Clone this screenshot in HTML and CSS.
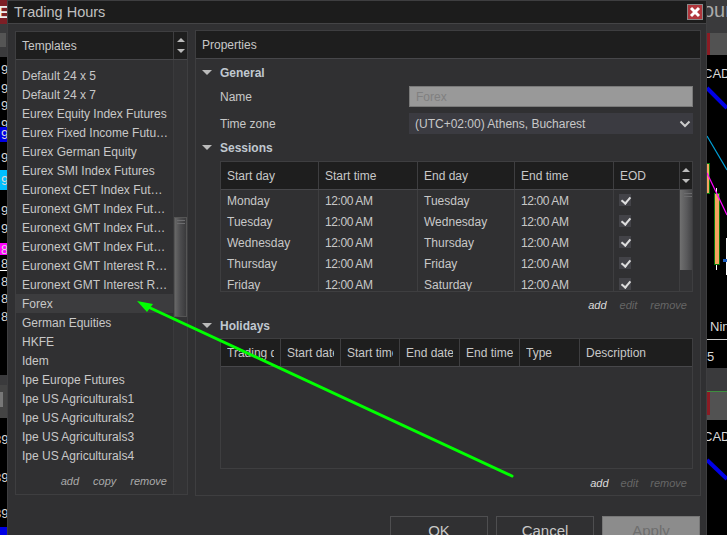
FILE: index.html
```html
<!DOCTYPE html>
<html>
	<head>
		<meta charset="UTF-8">
		<title>Trading Hours</title>
		<link rel="stylesheet" href="styles.css">
	</head>
	<body>
		<div class="desktop">
			<!-- charts behind the dialog -->
			<svg class="backdrop" width="727" height="535" viewBox="0 0 727 535">
				<rect x="0" y="0" width="7" height="24" fill="#7d1f26"/>
				<rect x="0" y="24" width="7" height="33" fill="#3a3a3c"/>
				<rect x="0" y="33" width="6" height="14" fill="#555"/>
				<rect x="0" y="270" width="7" height="1" fill="#fff"/>
				<rect x="0" y="375" width="7" height="10" fill="#3a3a3c"/>
				<rect x="0" y="385" width="7" height="33" fill="#444"/>
				<rect x="0" y="392" width="3" height="15" fill="#777"/>
				<rect x="0" y="527" width="7" height="8" fill="#0000e6"/>
				<g class="bg-num">
					<text class="bg-e" x="-2" y="18">E</text>
					<text x="1" y="74">9</text>
					<text x="1" y="93">9</text>
					<text x="1" y="110">9</text>
					<text x="1" y="129">9</text>
				</g>
				<rect x="0" y="127" width="7" height="15" fill="#0000e6"/>
				<rect x="0" y="170" width="7" height="20" fill="#00bfff"/>
				<rect x="0" y="243" width="7" height="12" fill="#ff00ff"/>
				<g class="bg-num">
					<text x="1" y="139">9</text>
					<text x="1" y="162">9</text>
					<text x="1" y="185">9</text>
					<text x="1" y="215">9</text>
					<text x="1" y="233">9</text>
					<text x="1" y="254">8</text>
					<text x="1" y="268">8</text>
					<text x="1" y="286">8</text>
					<text x="1" y="303">8</text>
					<text x="1" y="321">8</text>
					<text x="-6" y="444">89</text>
					<text x="-6" y="482">89</text>
					<text x="-6" y="518">89</text>
				</g>

				<rect x="707" y="0" width="20" height="33" fill="#3a3a3c"/>
				<rect x="707" y="33" width="20" height="22" fill="#525252"/>
				<rect x="707" y="33" width="3" height="22" fill="#8a1c24"/>
				<rect x="707" y="368" width="20" height="23" fill="#3a3a3c"/>
				<rect x="707" y="391" width="20" height="1" fill="#3e8e3e"/>
				<rect x="707" y="392" width="20" height="28" fill="#525252"/>
				<rect x="707" y="392" width="3" height="23" fill="#8a1c24"/>
				<line x1="707" y1="88" x2="727" y2="108" stroke="#0000e6" stroke-width="4"/>
				<line x1="707" y1="136" x2="727" y2="170" stroke="#00a0d8" stroke-width="1.2"/>
				<line x1="707" y1="460" x2="727" y2="479" stroke="#0000e6" stroke-width="4"/>
				<line x1="716.5" y1="188" x2="716.5" y2="270" stroke="#fff"/>
				<rect x="706.5" y="163.5" width="3" height="30" fill="#f4a460" stroke="#0a7a0a"/>
				<rect x="714.5" y="193.5" width="5" height="71" fill="#f4a460" stroke="#0a7a0a"/>
				<line x1="707" y1="173" x2="727" y2="215" stroke="#ff00ff" stroke-width="1.2"/>
				<rect x="726" y="238" width="1" height="37" fill="#fff"/>
				<rect x="723" y="259" width="4" height="3" fill="#2060c0"/>
				<rect x="707" y="339" width="20" height="1" fill="#ccc"/>
				<g class="bg-label">
					<text class="bg-big" x="703" y="17">ount</text>
					<text x="703" y="78">CAD</text>
					<text x="710" y="331">Ninj</text>
					<text x="707" y="361">5</text>
					<text x="703" y="441">CAD</text>
				</g>
			</svg>

			<div class="dialog">
				<div class="titlebar">
					<span class="title">Trading Hours</span>
					<button class="close">
						<svg width="12" height="12" viewBox="0 0 12 12"><path d="M2 2l8 8M10 2l-8 8" stroke="#fff" stroke-width="3"/></svg>
					</button>
				</div>
				<div class="content">
					<div class="panel templates">
						<div class="panel-head">
							<span class="panel-title">Templates</span>
							<div class="spin">
								<i class="up"></i>
								<i class="down"></i>
							</div>
						</div>
						<div class="tpl-body">
							<div class="tpl-main">
								<ul class="tpl-list">
									<li>Default 24 x 5</li>
									<li>Default 24 x 7</li>
									<li>Eurex Equity Index Futures</li>
									<li>Eurex Fixed Income Futures</li>
									<li>Eurex German Equity</li>
									<li>Eurex SMI Index Futures</li>
									<li>Euronext CET Index Futures</li>
									<li>Euronext GMT Index Futures</li>
									<li>Euronext GMT Index Futures</li>
									<li>Euronext GMT Index Futures</li>
									<li>Euronext GMT Interest Rate Futures</li>
									<li>Euronext GMT Interest Rate Futures</li>
									<li class="selected">Forex</li>
									<li>German Equities</li>
									<li>HKFE</li>
									<li>Idem</li>
									<li>Ipe Europe Futures</li>
									<li>Ipe US Agriculturals1</li>
									<li>Ipe US Agriculturals2</li>
									<li>Ipe US Agriculturals3</li>
									<li>Ipe US Agriculturals4</li>
								</ul>
								<div class="links tpl-links">
									<a>add</a>
									<a>copy</a>
									<a>remove</a>
								</div>
							</div>
							<div class="track tpl-track">
								<div class="thumb tpl-thumb"><b></b><b></b></div>
							</div>
						</div>
					</div>

					<div class="panel props">
						<div class="panel-head">
							<span class="panel-title">Properties</span>
						</div>
						<div class="props-body">
							<div class="section">General</div>
							<div class="field first">
								<label>Name</label>
								<div class="input">Forex</div>
							</div>
							<div class="field">
								<label>Time zone</label>
								<div class="select">
									<span>(UTC+02:00) Athens, Bucharest</span>
									<svg width="12" height="8" viewBox="0 0 12 8"><path d="M1.5 1.5l4.5 4.5 4.5-4.5" fill="none" stroke="#ccc" stroke-width="2"/></svg>
								</div>
							</div>

							<div class="section sessions-head">Sessions</div>
							<div class="grid sessions">
								<div class="grid-head">
									<div class="cell">Start day</div>
									<div class="cell">Start time</div>
									<div class="cell">End day</div>
									<div class="cell">End time</div>
									<div class="cell">EOD</div>
									<div class="spin"><i class="up"></i><i class="down"></i></div>
								</div>
								<div class="sess-body">
									<div class="sess-rows">
										<div class="row"><div class="cell">Monday</div><div class="cell time">12:00 AM</div><div class="cell">Tuesday</div><div class="cell time">12:00 AM</div><div class="cell"><span class="check"></span></div></div>
										<div class="row"><div class="cell">Tuesday</div><div class="cell time">12:00 AM</div><div class="cell">Wednesday</div><div class="cell time">12:00 AM</div><div class="cell"><span class="check"></span></div></div>
										<div class="row"><div class="cell">Wednesday</div><div class="cell time">12:00 AM</div><div class="cell">Thursday</div><div class="cell time">12:00 AM</div><div class="cell"><span class="check"></span></div></div>
										<div class="row"><div class="cell">Thursday</div><div class="cell time">12:00 AM</div><div class="cell">Friday</div><div class="cell time">12:00 AM</div><div class="cell"><span class="check"></span></div></div>
										<div class="row"><div class="cell">Friday</div><div class="cell time">12:00 AM</div><div class="cell">Saturday</div><div class="cell time">12:00 AM</div><div class="cell"><span class="check"></span></div></div>
									</div>
									<div class="track sess-track">
										<div class="thumb sess-thumb"><b></b><b></b></div>
									</div>
								</div>
							</div>
							<div class="links grid-links">
								<a class="on">add</a>
								<a>edit</a>
								<a>remove</a>
							</div>

							<div class="section holidays-head">Holidays</div>
							<div class="grid holidays">
								<div class="grid-head">
									<div class="cell"><span>Trading day</span></div>
									<div class="cell"><span>Start date</span></div>
									<div class="cell"><span>Start time</span></div>
									<div class="cell"><span>End date</span></div>
									<div class="cell"><span>End time</span></div>
									<div class="cell"><span>Type</span></div>
									<div class="cell"><span>Description</span></div>
								</div>
							</div>
							<div class="links grid-links hol-links">
								<a class="on">add</a>
								<a>edit</a>
								<a>remove</a>
							</div>
						</div>
					</div>
				</div>
				<div class="buttons">
					<button class="btn">OK</button>
					<button class="btn">Cancel</button>
					<button class="btn disabled">Apply</button>
				</div>
			</div>

			<!-- annotation on top of the screenshot -->
			<svg class="arrow" width="727" height="535" viewBox="0 0 727 535">
				<line x1="512" y1="476" x2="146" y2="306" stroke="#00ff00" stroke-width="3" stroke-linecap="round"/>
				<polygon points="137,301 153,304 147,312" fill="#00ff00"/>
			</svg>
		</div>
	</body>
</html>
```
FILE: styles.css
```css
* {
	margin: 0;
	padding: 0;
	box-sizing: border-box;
}
html,
body {
	height: 100%;
	background: #000;
	overflow: hidden;
}
body {
	font-family: "Liberation Sans", Arial, sans-serif;
	font-size: 12px;
	color: #c8c8c8;
}
ul {
	list-style: none;
}
.desktop {
	position: relative;
	width: 727px;
	height: 535px;
	overflow: hidden;
}
.backdrop,
.arrow {
	position: absolute;
	left: 0;
	top: 0;
}
.arrow {
	pointer-events: none;
}
.bg-num text,
.bg-label text {
	font-size: 13px;
	fill: #d8d8d8;
}
.bg-num .bg-e {
	font-size: 16px;
	font-weight: bold;
	fill: #eee;
}
.bg-label .bg-big {
	font-size: 20px;
	fill: #aaa;
}

/* dialog */
.dialog {
	position: absolute;
	left: 7px;
	top: 0;
	width: 700px;
	height: 535px;
	background: #303032;
	border: 1px solid #3e3e40;
	border-bottom: none;
	overflow: hidden;
}
.titlebar {
	display: flex;
	align-items: center;
	justify-content: space-between;
	height: 23px;
	padding: 0 3px 0 6px;
	background: #1c1c1c;
	border-bottom: 1px solid #444446;
}
.title {
	font-size: 14.5px;
	color: #c0c0c0;
}
.close {
	display: flex;
	align-items: center;
	justify-content: center;
	width: 16px;
	height: 16px;
	background: #b0363c;
	border: 1px solid #888;
}
.content {
	display: flex;
	align-items: flex-start;
	gap: 7px;
	padding: 6px 6px 0 7px;
}
.panel {
	display: flex;
	flex-direction: column;
	border: 1px solid #3e3e40;
}
.panel-head {
	display: flex;
	align-items: center;
	justify-content: space-between;
	height: 28px;
	background: #1e1e1e;
	border-bottom: 1px solid #47474a;
	flex-shrink: 0;
}
.panel-title {
	padding-left: 6px;
}
.spin {
	display: flex;
	flex-direction: column;
	align-items: center;
	justify-content: center;
	gap: 7px;
	align-self: stretch;
	border-left: 1px solid #3e3e40;
}
.spin i {
	display: block;
	width: 0;
	height: 0;
	border-left: 4px solid transparent;
	border-right: 4px solid transparent;
}
.spin .up {
	border-bottom: 4px solid #bbb;
}
.spin .down {
	border-top: 4px solid #bbb;
}

/* templates */
.templates {
	width: 173px;
	height: 464px;
	margin-top: 1px;
}
.templates .spin {
	width: 14px;
}
.tpl-body {
	display: flex;
	flex: 1;
	min-height: 0;
}
.tpl-main {
	display: flex;
	flex-direction: column;
	width: 157px;
	padding-top: 6px;
}
.tpl-list {
	flex: 1;
}
.tpl-list li {
	height: 19px;
	line-height: 21px;
	padding: 0 4px 0 6px;
	white-space: nowrap;
	overflow: hidden;
	text-overflow: ellipsis;
}
.tpl-list .selected {
	background: #3c3c3e;
}
.track {
	flex-shrink: 0;
	background: #333335;
	border-left: 1px solid #3a3a3c;
}
.tpl-track {
	width: 14px;
}
.thumb {
	display: flex;
	flex-direction: column;
	align-items: flex-end;
	gap: 2px;
	padding: 2px 1px 0 0;
	background: linear-gradient(to right, #686868, #4c4c4e 50%, #3a3a3c);
	border: 1px solid #555;
}
.thumb b {
	display: block;
	width: 8px;
	height: 1px;
	background: #6c6c6e;
}
.tpl-thumb {
	height: 100px;
	margin-top: 157px;
}
.links {
	display: flex;
	justify-content: flex-end;
	font-style: italic;
	font-size: 11px;
	color: #aaa;
}
.tpl-links {
	gap: 14px;
	height: 22px;
	padding: 3px 6px 0 0;
}

/* properties */
.props {
	flex: 1;
	height: 466px;
}
.props-body {
	padding: 4px 7px 0 6px;
}
.section {
	position: relative;
	height: 18px;
	line-height: 20px;
	padding-left: 18px;
	font-weight: bold;
	color: #c0c8d0;
}
.section::before {
	content: "";
	position: absolute;
	left: 0;
	top: 7px;
	width: 0;
	height: 0;
	border-left: 5px solid transparent;
	border-right: 5px solid transparent;
	border-top: 5px solid #bbb;
}
.field {
	display: flex;
	align-items: center;
	height: 21px;
	margin-top: 6px;
	padding-left: 18px;
}
.field.first {
	margin-top: 5px;
}
.field label {
	width: 189px;
}
.input {
	flex: 1;
	height: 21px;
	line-height: 21px;
	padding-left: 6px;
	background: #999;
	border: 1px solid #7a7a7a;
	color: #808080;
}
.select {
	display: flex;
	align-items: center;
	justify-content: space-between;
	flex: 1;
	height: 21px;
	padding: 0 2px 0 6px;
	background: #3b3b41;
}
.sessions-head {
	margin-top: 4px;
}
.holidays-head {
	margin-top: 4px;
}
.grid {
	margin: 5px 0 0 18px;
	border: 1px solid #3e3e40;
}
.grid-head {
	display: flex;
	height: 28px;
	background: #1e1e1e;
	border-bottom: 1px solid #47474a;
}
.cell {
	height: 100%;
	line-height: 29px;
	padding: 0 6px;
	border-right: 1px solid #3e3e40;
	white-space: nowrap;
	overflow: hidden;
}
.grid-head .spin {
	width: 12px;
	border-left: none;
}
.sessions {
	height: 131px;
}
.sessions .cell:nth-child(1) {
	width: 98px;
	flex-shrink: 0;
}
.sessions .cell:nth-child(2) {
	width: 99px;
	flex-shrink: 0;
}
.sessions .cell:nth-child(3) {
	width: 97px;
	flex-shrink: 0;
}
.sessions .cell:nth-child(4) {
	width: 99px;
	flex-shrink: 0;
}
.sessions .cell:nth-child(5) {
	width: 66px;
	flex-shrink: 0;
}
.sess-body {
	display: flex;
	height: 101px;
	overflow: hidden;
}
.sess-rows {
	width: 459px;
	flex-shrink: 0;
	height: 101px;
	overflow: hidden;
}
.row {
	display: flex;
	height: 21px;
}
.row .cell {
	line-height: 23px;
}
.row .time {
	letter-spacing: -0.4px;
}
.check {
	position: relative;
	display: block;
	width: 12px;
	height: 12px;
	margin: 4px 0 0 -1px;
	background: #434348;
}
.check::after {
	content: "";
	position: absolute;
	left: 4px;
	top: 1px;
	width: 4px;
	height: 7px;
	border-right: 2px solid #ddd;
	border-bottom: 2px solid #ddd;
	transform: rotate(40deg);
}
.sess-track {
	width: 12px;
	border-left: none;
}
.sess-thumb {
	height: 80px;
	background: linear-gradient(to right, #707070, #5a5a5c 55%, #444446);
	border: none;
	padding: 3px 0 0;
}
.grid-links {
	gap: 13px;
	height: 20px;
	padding: 7px 6px 0 0;
}
.holidays {
	height: 131px;
	margin-top: 4px;
}
.holidays .cell {
	width: 60px;
	flex-shrink: 0;
}
.holidays .cell:nth-child(3) {
	width: 59px;
}
.holidays .cell:last-child {
	width: 112px;
	border-right: none;
}
.holidays .cell span {
	display: block;
	overflow: hidden;
}
.hol-links {
	gap: 12px;
	height: 22px;
	padding-top: 8px;
}
.links .on {
	color: #ddd;
}
.grid-links a:not(.on) {
	color: #666;
}

/* bottom buttons */
.buttons {
	display: flex;
	justify-content: flex-end;
	gap: 8px;
	margin-top: 20px;
	padding-right: 6px;
}
.btn {
	width: 98px;
	height: 28px;
	background: #303032;
	border: 1px solid #4e4e50;
	font-family: "Liberation Sans", Arial, sans-serif;
	font-size: 15px;
	color: #c8c8c8;
}
.btn.disabled {
	background: #8c8c8c;
	border-color: #777;
	color: #6e6e6e;
}
```
